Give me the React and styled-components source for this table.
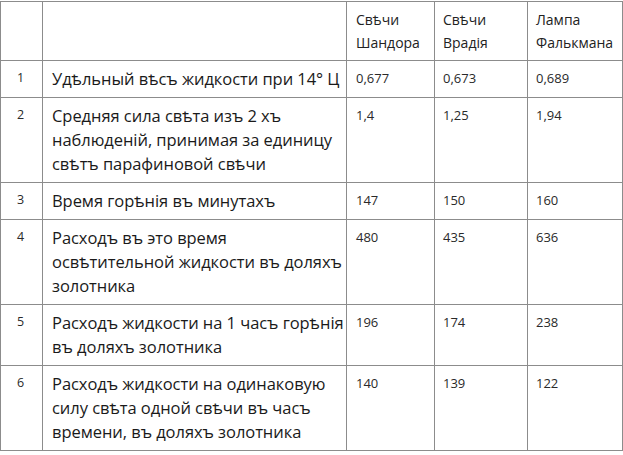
import styled, { createGlobalStyle } from "styled-components";

const GlobalStyle = createGlobalStyle`
  html, body {
    margin: 0;
    padding: 0;
    background: #ffffff;
  }
  body {
    font-family: "Open Sans", "Noto Sans", sans-serif;
    color: #1e1e1e;
  }
`

const Page = styled.div`
  width: 623px;
  padding-top: 1px;
`

const Table = styled.table`
  border-collapse: collapse;
  table-layout: fixed;
  width: 622px;

  td, th {
    box-sizing: border-box;
    border: 1px solid #8c8c8c;
    vertical-align: top;
    text-align: left;
    font-weight: 400;
    white-space: nowrap;
  }
`

const HeadCell = styled.th`
  width: ${(p) => p.$w}px;
  padding: 6px 0 6px ${(p) => p.$pad}px;
  font-size: 14px;
  line-height: 23px;
  color: #222;
`

const NumCell = styled.td`
  padding: 7px 0 6px 16px;
  font-size: 12.5px;
  line-height: 20px;
  color: #2a2a2a;
`

const TextCell = styled.td`
  padding: 6px 0 6px 9px;
  font-size: 16.5px;
  line-height: 24px;
  letter-spacing: -0.05px;
  color: #1a1a1a;
`

const ValueCell = styled.td`
  padding: 7px 0 6px ${(p) => p.$pad}px;
  font-size: 13px;
  line-height: 20px;
  color: #2a2a2a;
`

const columns = [
  { w: 42, pad: 16, lines: [] },
  { w: 304, pad: 9, lines: [] },
  { w: 88, pad: 9, lines: ["Свѣчи", "Шандора"] },
  { w: 93, pad: 8, lines: ["Свѣчи", "Врадія"] },
  { w: 95, pad: 8, lines: ["Лампа", "Фалькмана"] },
];

const rows = [
  { n: 1, text: ["Удѣльный вѣсъ жидкости при 14° Ц"], v: ["0,677", "0,673", "0,689"] },
  {
    n: 2,
    text: ["Средняя сила свѣта изъ 2 хъ", "наблюденій, принимая за единицу", "свѣтъ парафиновой свѣчи"],
    v: ["1,4", "1,25", "1,94"],
  },
  { n: 3, text: ["Время горѣнія въ минутахъ"], v: ["147", "150", "160"] },
  {
    n: 4,
    text: ["Расходъ въ это время", "освѣтительной жидкости въ доляхъ", "золотника"],
    v: ["480", "435", "636"],
  },
  { n: 5, text: ["Расходъ жидкости на 1 часъ горѣнія", "въ доляхъ золотника"], v: ["196", "174", "238"] },
  {
    n: 6,
    text: ["Расходъ жидкости на одинаковую", "силу свѣта одной свѣчи въ часъ", "времени, въ доляхъ золотника"],
    v: ["140", "139", "122"],
  },
];

const Lines = ({ lines }) =>
  lines.map((l, i) => (
    <span key={i}>
      {l}
      {i < lines.length - 1 && <br />}
    </span>
  ));

export default function App() {
  return (
    <>
      <GlobalStyle />
      <Page>
        <Table>
          <thead>
            <tr>
              {columns.map((c, i) => (
                <HeadCell key={i} $w={c.w} $pad={c.pad}>
                  {c.lines.length ? <Lines lines={c.lines} /> : <>&nbsp;<br />&nbsp;</>}
                </HeadCell>
              ))}
            </tr>
          </thead>
          <tbody>
            {rows.map((r) => (
              <tr key={r.n}>
                <NumCell>{r.n}</NumCell>
                <TextCell>
                  <Lines lines={r.text} />
                </TextCell>
                {r.v.map((v, i) => (
                  <ValueCell key={i} $pad={columns[i + 2].pad}>
                    {v}
                  </ValueCell>
                ))}
              </tr>
            ))}
          </tbody>
        </Table>
      </Page>
    </>
  );
}
